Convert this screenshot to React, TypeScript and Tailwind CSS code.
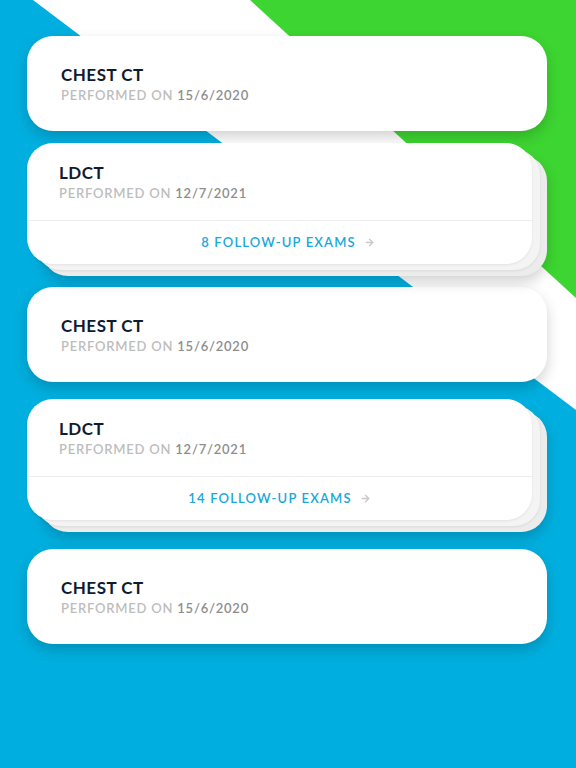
import { ArrowRight } from "lucide-react";

const font = { fontFamily: "Lato, 'Open Sans', sans-serif" };

function Background() {
  return (
    <svg
      className="absolute inset-0 h-full w-full"
      viewBox="0 0 576 768"
      preserveAspectRatio="none"
    >
      <polygon points="33,0 576,0 576,410" fill="#ffffff" />
      <polygon points="250,0 576,0 576,298" fill="#3dd531" />
    </svg>
  );
}

function ExamText({ title, date }: { title: string; date: string }) {
  return (
    <div>
      <div className="text-[17px] font-bold leading-[22px] tracking-[0.03em] text-[#101b2e]">
        {title}
      </div>
      <div className="text-[13px] font-semibold leading-[18px] tracking-[0.06em] text-[#bdbdbd]">
        PERFORMED ON <span className="text-[#8d8d8d]">{date}</span>
      </div>
    </div>
  );
}

function ExamCard({ title, date }: { title: string; date: string }) {
  return (
    <div className="flex h-[95px] w-[520px] items-center rounded-[26px] bg-white pl-[34px] shadow-[0_6px_14px_rgba(0,0,0,0.18)]">
      <ExamText title={title} date={date} />
    </div>
  );
}

function StackedCard({
  title,
  date,
  count,
  shift,
}: {
  title: string;
  date: string;
  count: number;
  shift?: boolean;
}) {
  return (
    <div className="relative h-[133px] w-[520px]">
      {/* cards stacked behind */}
      <div className="absolute left-[15px] top-[12px] h-[121px] w-[505px] rounded-[26px] bg-[#ececec] shadow-[0_6px_14px_rgba(0,0,0,0.18)]" />
      <div className="absolute left-[8px] top-[6px] h-[121px] w-[505px] rounded-[26px] bg-[#f4f4f4] shadow-[0_1px_3px_rgba(0,0,0,0.08)]" />
      <div className="relative flex h-[121px] w-[505px] flex-col rounded-[26px] bg-white shadow-[0_1px_3px_rgba(0,0,0,0.08)]">
        <div className="h-[78px] border-b border-[#eeeeee] pl-[32px] pt-[19px]">
          <ExamText title={title} date={date} />
        </div>
        <div
          className={
            shift
              ? "flex flex-1 items-center justify-center gap-[8px] pl-[17px]"
              : "flex flex-1 items-center justify-center gap-[8px]"
          }
        >
          <span className="text-[13px] font-semibold tracking-[0.09em] text-[#17a8dc]">
            {count} FOLLOW-UP EXAMS
          </span>
          <ArrowRight size={11} strokeWidth={3} className="text-[#c9c9c9]" />
        </div>
      </div>
    </div>
  );
}

export default function App() {
  return (
    <div
      className="relative h-[768px] w-full overflow-hidden bg-[#00afdf]"
      style={font}
    >
      <Background />
      <div className="relative flex flex-col pl-[27px] pt-[36px]">
        <ExamCard title="CHEST CT" date="15/6/2020" />
        <div className="mt-[12px]">
          <StackedCard title="LDCT" date="12/7/2021" count={8} shift />
        </div>
        <div className="mt-[11px]">
          <ExamCard title="CHEST CT" date="15/6/2020" />
        </div>
        <div className="mt-[17px]">
          <StackedCard title="LDCT" date="12/7/2021" count={14} />
        </div>
        <div className="mt-[17px]">
          <ExamCard title="CHEST CT" date="15/6/2020" />
        </div>
      </div>
    </div>
  );
}
